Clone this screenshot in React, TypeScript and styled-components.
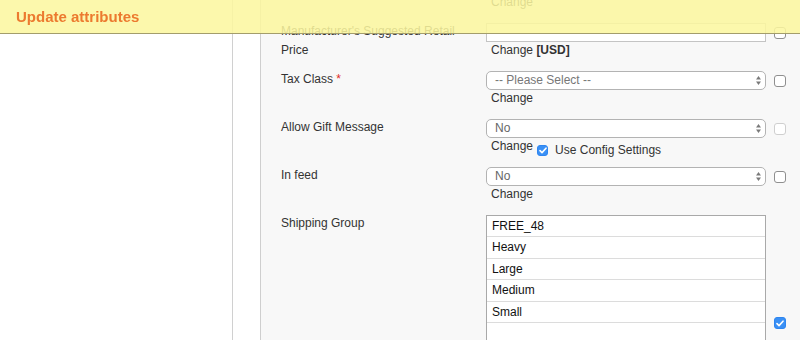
import React from 'react';
import styled, { createGlobalStyle } from 'styled-components';

const GlobalStyle = createGlobalStyle`
  html, body, #root {
    height: 100%;
    margin: 0;
  }
  body {
    font-family: "Liberation Sans", Arial, sans-serif;
    font-size: 12px;
    color: #333;
    background: #fff;
    overflow: hidden;
  }
`;

const Header = styled.header`
  position: fixed;
  top: 0;
  left: 0;
  right: 0;
  height: 33px;
  display: flex;
  align-items: center;
  padding-left: 16px;
  background: rgba(251, 247, 158, 0.86);
  border-bottom: 1px solid #a39d6c;
  z-index: 10;
`;

const Title = styled.h1`
  margin: 0;
  font-size: 15px;
  font-weight: bold;
  color: #ec7a2f;
`;

const Page = styled.div`
  display: flex;
  height: 100%;
`;

const Sidebar = styled.aside`
  width: 232px;
  flex: none;
  background: #fff;
  border-right: 1px solid #d0d0d0;
  box-shadow: 1px 0 3px rgba(0, 0, 0, 0.12);
`;

const Main = styled.main`
  flex: 1;
  padding-left: 27px;
  background: #fff;
`;

const Panel = styled.div`
  height: 100%;
  border-left: 1px solid #cfcfcf;
  background: #f8f8f8;
  padding-left: 20px;
  overflow: hidden;
`;

const Form = styled.div`
  margin-top: -6px;
`;

const Row = styled.div`
  display: grid;
  grid-template-columns: 205px 280px 24px;
  align-items: start;
  margin-bottom: 13px;
`;

const Label = styled.label`
  line-height: 19px;
  margin: -1px 0 -4px;
  color: #333;
  padding-right: 20px;
`;

const Required = styled.span`
  color: #e02b27;
`;

const Control = styled.div`
  display: flex;
  flex-direction: column;
`;

const TextInput = styled.div`
  height: 19px;
  box-sizing: border-box;
  border: 1px solid #c4c4c4;
  background: #fff;
`;

const SelectBox = styled.div<{ $placeholder?: boolean }>`
  position: relative;
  height: 19px;
  box-sizing: border-box;
  border: 1px solid #b3b3b3;
  border-radius: 5px;
  background: #fff;
  padding-left: 8px;
  line-height: 17px;
  color: ${p => (p.$placeholder ? '#777' : '#666')};
  font-size: 12px;
`;

const Arrows = styled.svg`
  position: absolute;
  right: 3px;
  top: 3px;
`;

const ChangeLine = styled.div`
  display: flex;
  align-items: flex-start;
  height: 16px;
  line-height: 16px;
  padding-left: 5px;
  color: #333;
`;

const ConfigGroup = styled.span`
  display: flex;
  align-items: center;
  height: 16px;
  margin-top: 4px;
  margin-left: 4px;
  gap: 7px;
`;

const Box = styled.span<{ $checked?: boolean; $disabled?: boolean; $top?: number; $size?: number }>`
  display: inline-flex;
  align-items: center;
  justify-content: center;
  box-sizing: border-box;
  width: ${p => p.$size ?? 12}px;
  height: ${p => p.$size ?? 12}px;
  margin-top: ${p => p.$top ?? 0}px;
  border-radius: 3px;
  border: 1px solid ${p => (p.$checked ? '#2f86f0' : p.$disabled ? '#cfcfcf' : '#8f8f8f')};
  background: ${p => (p.$checked ? '#3a90f5' : '#fff')};
`;

const CheckCell = styled.div`
  padding-left: 8px;
`;

const MultiSelect = styled.div`
  height: 150px;
  border: 1px solid #a9a9a9;
  background: #fff;
`;

const Option = styled.div`
  height: 21.4px;
  box-sizing: border-box;
  border-bottom: 1px solid #dcdcdc;
  padding-left: 5px;
  line-height: 20px;
  color: #111;
`;

const Strong = styled.b`
  font-weight: bold;
`;

const SelectArrows = () => (
  <Arrows width="7" height="11" viewBox="0 0 7 11">
    <path d="M3.5 1 L6 4.5 H1 Z" fill="#7a7a7a" />
    <path d="M3.5 10 L6 6.5 H1 Z" fill="#7a7a7a" />
  </Arrows>
);

const Check = ({ checked, disabled, top, size }: { checked?: boolean; disabled?: boolean; top?: number; size?: number }) => (
  <Box $checked={checked} $disabled={disabled} $top={top} $size={size}>
    {checked && (
      <svg width="8" height="7" viewBox="0 0 8 7">
        <path d="M1 3.6 L3 5.6 L7 1.2" fill="none" stroke="#fff" strokeWidth="1.6" strokeLinecap="round" strokeLinejoin="round" />
      </svg>
    )}
  </Box>
);

const Select = ({ value, placeholder }: { value: string; placeholder?: boolean }) => (
  <SelectBox $placeholder={placeholder}>
    {value}
    <SelectArrows />
  </SelectBox>
);

const shippingGroups = ['FREE_48', 'Heavy', 'Large', 'Medium', 'Small'];

export default function App() {
  return (
    <>
      <GlobalStyle />
      <Header>
        <Title>Update attributes</Title>
      </Header>
      <Page>
        <Sidebar />
        <Main>
          <Panel>
            <Form>
              <Row>
                <span />
                <Control>
                  <ChangeLine>Change</ChangeLine>
                </Control>
              </Row>

              <Row>
                <Label>Manufacturer's Suggested Retail Price</Label>
                <Control>
                  <TextInput />
                  <ChangeLine>
                    Change&nbsp;<Strong>[USD]</Strong>
                  </ChangeLine>
                </Control>
                <CheckCell>
                  <Check top={4} />
                </CheckCell>
              </Row>

              <Row>
                <Label>
                  Tax Class <Required>*</Required>
                </Label>
                <Control>
                  <Select value="-- Please Select --" placeholder />
                  <ChangeLine>Change</ChangeLine>
                </Control>
                <CheckCell>
                  <Check top={4} />
                </CheckCell>
              </Row>

              <Row>
                <Label>Allow Gift Message</Label>
                <Control>
                  <Select value="No" />
                  <ChangeLine>
                    Change
                    <ConfigGroup>
                      <Check checked size={11} />
                      Use Config Settings
                    </ConfigGroup>
                  </ChangeLine>
                </Control>
                <CheckCell>
                  <Check top={4} disabled />
                </CheckCell>
              </Row>

              <Row>
                <Label>In feed</Label>
                <Control>
                  <Select value="No" />
                  <ChangeLine>Change</ChangeLine>
                </Control>
                <CheckCell>
                  <Check top={4} />
                </CheckCell>
              </Row>

              <Row>
                <Label>Shipping Group</Label>
                <Control>
                  <MultiSelect>
                    {shippingGroups.map(g => (
                      <Option key={g}>{g}</Option>
                    ))}
                  </MultiSelect>
                </Control>
                <CheckCell>
                  <Check top={102} checked />
                </CheckCell>
              </Row>
            </Form>
          </Panel>
        </Main>
      </Page>
    </>
  );
}
